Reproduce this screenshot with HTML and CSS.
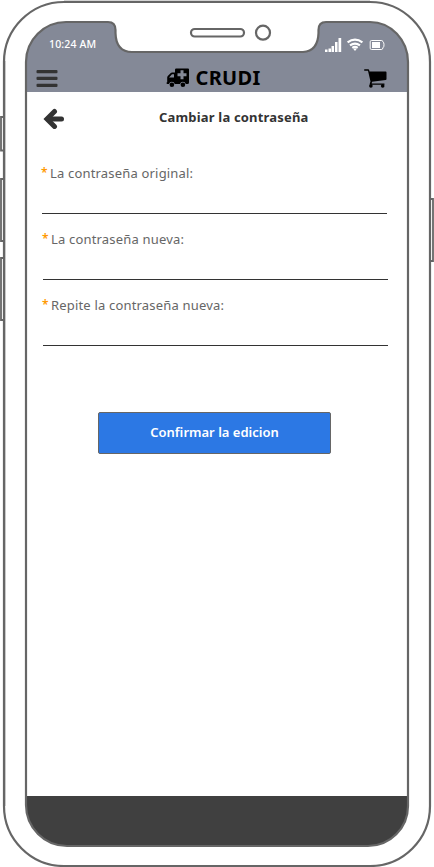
FILE: index.html
```
<!DOCTYPE html>
<html lang="es">
<head>
<meta charset="utf-8">
<meta name="viewport" content="width=device-width">
<title>Cambiar la contraseña</title>
<link rel="stylesheet" href="styles.css">
</head>
<body>
<div class="phone">
  <div class="screen">
    <header class="header">
      <div class="status">
        <span class="time">10:24 AM</span>
        <svg class="signals" width="62" height="16" viewBox="324 37 62 16" fill="#fff">
          <path d="M325 49.500h2.500V52H325zM328.500 48.500h2.500V52h-2.500zM331.500 46h2.500v6h-2.500zM335 42h2.500v10H335zM338.500 38h2.700v14h-2.700z"/>
          <g fill="none" stroke="#fff" stroke-width="2.200"><path d="M347.600 42.400q7.400-5.400 14.800 0"/><path d="M350 45.300q5-3.500 10 0"/><path d="M352.300 47.800q2.700-1.900 5.400 0"/></g>
          <path d="M353.200 48.800q1.800-1 3.600 0L355 51z"/>
          <path d="M371.500 40.500h10.200q1 0 1.200 1.300 1.100.5 1.100 3t-1.100 3q-.2 1.700-1.200 1.700h-10.200q-1.300 0-1.300-1.300v-6.400q0-1.300 1.300-1.300z" fill="none" stroke="#fff" stroke-width="1"/>
          <path d="M372 42h8v6h-8z"/>
        </svg>
      </div>
      <div class="nav">
        <svg class="menu" width="22" height="18" viewBox="0 0 22 18" fill="#333"><rect x=".5" width="21" height="3.300" rx="1"/><rect x=".5" y="6.800" width="21" height="3.300" rx="1"/><rect x=".5" y="13.700" width="21" height="3.300" rx="1"/></svg>
        <div class="brand">
          <svg width="24" height="20" viewBox="0 0 24 20">
            <path fill-rule="evenodd" d="M9 1.800Q9 .6 10.200 .6H22q1 0 1 1v12.900q0 1.500-1.500 1.500h-1.700a3 3 0 0 0-5.800 0H8.800A3 3 0 0 0 3 16H1.500Q.5 16 .5 15q0-.7.700-.8V9.500q0-.8.600-1.400l3-3Q5.300 4.500 6 4.500h3zM3 9.500h5V6.300H6L3 9.500zM14.500 2.300v3h-3v3h3v3h3v-3h3v-3h-3v-3z"/>
            <circle cx="5.900" cy="16.800" r="2.300"/><circle cx="16.900" cy="16.800" r="2.300"/>
          </svg>
          <span class="logo">CRUDI</span>
        </div>
        <svg class="cart" width="24" height="20" viewBox="0 0 24 20"><path d="M.8.300H4.200Q5 .3 5.200 1.200L5.500 2.500H21.700Q22.500 2.500 22.500 3.400V10q0 .9-.9 1L8 12.800l-.3 1.600H20q.7 0 .7.700t-.7.700H6.700q-1.300 0-.9-1.300l.7-2L4 1.700H.8Q0 1.600 0 1T.8.300z"/><circle cx="6.900" cy="16.900" r="1.800"/><circle cx="18.700" cy="16.900" r="1.800"/></svg>
      </div>
    </header>
    <main class="content">
      <div class="titlebar">
        <svg class="back" width="22" height="22" viewBox="0 0 22 22" fill="none" stroke="#333" stroke-width="5" stroke-linecap="round"><path d="M11.500 3.400 4 10.900 11.500 18.400"/><path d="M5 10.900H18.500"/></svg>
        <h1 class="title">Cambiar la contraseña</h1>
      </div>
      <form class="form">
        <label class="field first"><span class="star">*</span><span class="label">La contraseña original:</span></label>
        <label class="field"><span class="star">*</span><span class="label">La contraseña nueva:</span></label>
        <label class="field"><span class="star">*</span><span class="label">Repite la contraseña nueva:</span></label>
        <button class="confirm" type="button">Confirmar la edicion</button>
      </form>
    </main>
    <footer class="footer"></footer>
  </div>
  <svg class="frame" width="434" height="867" viewBox="0 0 434 867">
    <path class="mask" fill-rule="evenodd" d="M0 0H434V867H0zM66 22H108Q115.500 22 115.500 30V33Q116 52 132 52H303Q318 51 318.500 33V30Q318.500 22 326 22H370A38 40 0 0 1 408 62V806A40 40 0 0 1 368 846H67A41 41 0 0 1 26 805V62A40 40 0 0 1 66 22z"/>
    <path class="shade" d="M64 .5H370M5.500 61V806"/>
    <g class="line">
      <path d="M66 22H108Q115.500 22 115.500 30V33Q116 52 132 52H303Q318 51 318.500 33V30Q318.500 22 326 22H370A38 40 0 0 1 408 62V806A40 40 0 0 1 368 846H67A41 41 0 0 1 26 805V62A40 40 0 0 1 66 22z"/>
      <path d="M64 2H370A60 60 0 0 1 430 62V806A60 60 0 0 1 370 866H64A60 60 0 0 1 4 806V62A60 60 0 0 1 64 2z"/>
      <rect x="191" y="29" width="53" height="7.500" rx="3.750"/>
      <circle cx="263" cy="32.700" r="7"/>
    </g>
    <path class="keys" d="M4 117H1V150.500H4M4 179H1V241H4M4 258H1V320H4M430 199H433V261H430"/>
  </svg>
</div>
</body>
</html>
```
FILE: styles.css
```
* { box-sizing: border-box; }
body { margin: 0; background: #fff; font-family: "Noto Sans", "Open Sans", sans-serif; }
svg { display: block; flex: none; }
.phone { position: relative; width: 434px; height: 867px; padding: 22px 26px 21px; overflow: hidden; }
.screen { height: 824px; display: flex; flex-direction: column; }
.header { height: 70px; background: #848997; }
.status { height: 40px; padding: 15px 22px 0 23px; display: flex; justify-content: space-between; }
.time { font-size: 10.5px; line-height: 14px; letter-spacing: .15px; color: #fff; font-weight: 500; white-space: nowrap; }
.nav { height: 30px; padding: 0 20px 0 10px; display: flex; justify-content: space-between; }
.menu { margin-top: 8px; }
.brand { display: flex; padding-top: 6px; margin-left: 5px; }
.logo { width: 66px; margin-left: 6px; font-size: 20px; line-height: 20px; font-weight: 700; letter-spacing: .3px; }
.cart { margin-top: 7px; }
.content { flex: 1; padding: 0 16px; }
.titlebar { height: 58px; padding: 15px 2px 0 1px; display: flex; }
.back { margin-top: 1px; }
.title { margin: 0 0 0 94px; font-size: 13px; line-height: 20px; font-weight: 700; letter-spacing: .18px; color: #333; white-space: nowrap; }
.form { display: flex; flex-direction: column; }
.field { height: 66px; width: 345px; margin-left: 1px; padding-top: 15px; border-bottom: 1px solid #333; display: flex; line-height: 20px; font-size: 13px; color: #666; white-space: nowrap; }
.first { height: 64px; margin-left: 0; padding-top: 13px; }
.star { width: 8px; margin-left: -1px; margin-right: 1px; color: #f90; font-size: 12px; font-weight: 600; }
.label { letter-spacing: .18px; }
.confirm { width: 233px; height: 42px; margin: 66px 0 0 56px; padding: 0 0 3px; border: 1px solid #666; border-radius: 2px; background: #2c78e4; color: #fff; font: 600 13px/20px "Noto Sans", sans-serif; }
.footer { height: 50px; background: #404040; }
.frame { position: absolute; inset: 0; pointer-events: none; }
.mask { fill: #fff; }
.line { fill: none; stroke: #666; stroke-width: 2.200; }
.shade { fill: none; stroke: #d4d4d4; }
.keys { fill: none; stroke: #666; stroke-width: 1.800; }
```
